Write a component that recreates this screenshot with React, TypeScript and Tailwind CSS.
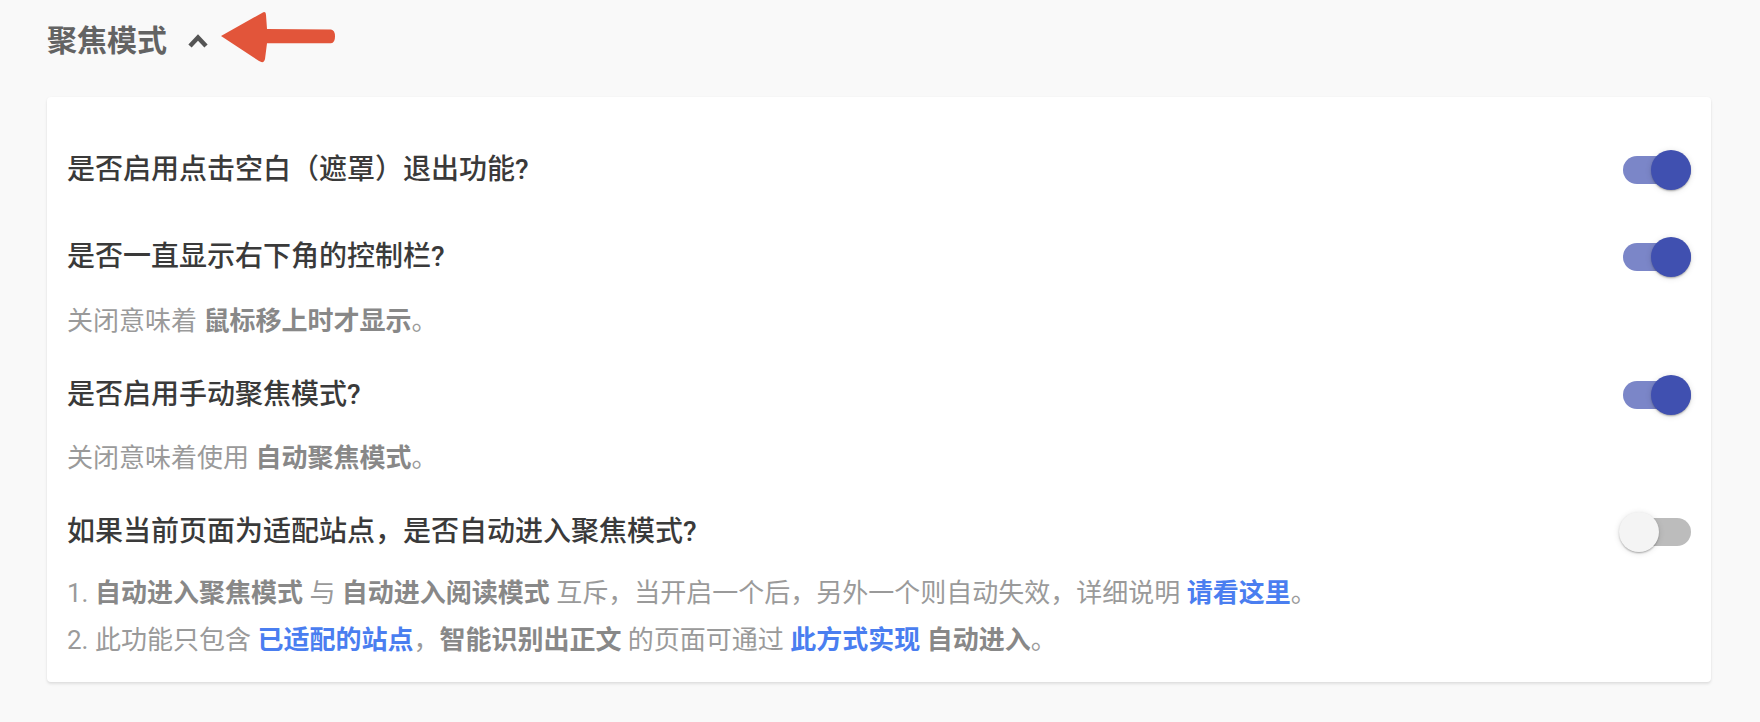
import React from "react";

const FONT = 'Roboto, "Noto Sans CJK SC", sans-serif';

function Toggle({ on }: { on: boolean }) {
  return (
    <div className="relative w-[68px] h-[40px] flex items-center shrink-0">
      <div
        className={
          "w-[68px] h-[28px] rounded-full " +
          (on ? "bg-[#7b86c8]" : "bg-[#bcbcbc]")
        }
      />
      <div
        className={
          "absolute top-0 w-[40px] h-[40px] rounded-full shadow-[0_2px_2px_-1px_rgba(0,0,0,0.2),0_1px_2px_0_rgba(0,0,0,0.14),0_1px_6px_0_rgba(0,0,0,0.12)] " +
          (on ? "left-[28px] bg-[#4050b0]" : "left-[-4px] bg-[#f4f4f4]")
        }
      />
    </div>
  );
}

function Question({ text, on, className }: { text: string; on: boolean; className?: string }) {
  return (
    <div className={"flex items-center justify-between h-[60px] " + (className ?? "")}>
      <span className="text-[28px] font-medium text-[#3a3a3a]">{text}</span>
      <Toggle on={on} />
    </div>
  );
}

const B = ({ children }: { children: React.ReactNode }) => (
  <span className="font-bold text-[#888888]">{children}</span>
);
const L = ({ children }: { children: React.ReactNode }) => (
  <span className="font-bold text-[#4a7ef0]">{children}</span>
);

export default function App() {
  return (
    <div
      className="relative w-[1760px] h-[722px] bg-[#f9f9f9] pl-[47px] pr-[49px] pt-[11px] overflow-hidden"
      style={{ fontFamily: FONT }}
    >
      <div className="flex items-center h-[60px]">
        <span className="text-[30px] font-bold text-[#636363] leading-none">聚焦模式</span>
        <svg className="ml-[20px]" width="22" height="18" viewBox="0 0 22 18">
          <polyline
            points="3,14 11,5.5 19,14"
            fill="none"
            stroke="#555555"
            strokeWidth="4.5"
            strokeLinejoin="miter"
          />
        </svg>
      </div>

      <svg
        className="absolute left-[215px] top-[6px]"
        width="126"
        height="62"
        viewBox="215 6 126 62"
      >
        <path
          d="M221,36 L262,13 Q266,10.5 266,15 L267,29 L331,29.5 Q335,30 335,36.5 Q335,43 331,43.3 L267,43.3 L265,59 Q264,64 259,61 Z"
          fill="#e2553a"
        />
      </svg>

      <div className="mt-[26px] bg-white rounded-[4px] shadow-[0_2px_3px_rgba(0,0,0,0.10),0_0_2px_rgba(0,0,0,0.04)] px-[20px] pt-[43px] pb-[18px]">
        <Question text="是否启用点击空白（遮罩）退出功能?" on={true} />
        <Question text="是否一直显示右下角的控制栏?" on={true} className="mt-[27px]" />
        <div className="mt-[14px] leading-[40px] text-[26px] text-[#9a9a9a]">
          关闭意味着 <B>鼠标移上时才显示</B>。
        </div>
        <Question text="是否启用手动聚焦模式?" on={true} className="mt-[24px]" />
        <div className="mt-[13px] leading-[40px] text-[26px] text-[#9a9a9a]">
          关闭意味着使用 <B>自动聚焦模式</B>。
        </div>
        <Question text="如果当前页面为适配站点，是否自动进入聚焦模式?" on={false} className="mt-[24px]" />
        <div className="mt-[8px] leading-[47px] text-[26px] text-[#9a9a9a]">
          <div>
            1. <B>自动进入聚焦模式</B> 与 <B>自动进入阅读模式</B> 互斥，当开启一个后，另外一个则自动失效，详细说明 <L>请看这里</L>。
          </div>
          <div>
            2. 此功能只包含 <L>已适配的站点</L>，<B>智能识别出正文</B> 的页面可通过 <L>此方式实现</L> <B>自动进入</B>。
          </div>
        </div>
      </div>
    </div>
  );
}
